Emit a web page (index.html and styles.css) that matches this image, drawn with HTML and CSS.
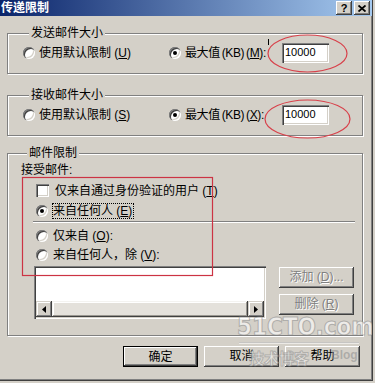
FILE: index.html
```html
<!DOCTYPE html>
<html lang="zh-CN">

<head>
    <meta charset="UTF-8">
    <meta name="viewport" content="width=device-width, initial-scale=1.0">
    <title>传递限制</title>
    <link rel="stylesheet" href="styles.css">
</head>

<body>
    <div class="window">
        <div class="titlebar">
            <span class="title">传递限制</span>
            <div class="title-buttons">
                <span class="tbtn">?</span>
                <span class="tbtn">
                    <svg width="8" height="7" viewBox="0 0 8 7"><path d="M0.5 0.5 L7.5 6.5 M7.5 0.5 L0.5 6.5" stroke="#000" stroke-width="1.8"/></svg>
                </span>
            </div>
        </div>

        <fieldset class="group group-send">
            <legend>发送邮件大小</legend>
            <div class="size-row">
                <label class="opt opt-default"><span class="radio"></span><span>使用默认限制 (<u>U</u>)</span></label>
                <label class="opt opt-max"><span class="radio checked"></span><span class="tight">最大值 (KB) (<u>M</u>):</span></label>
                <span class="textbox">10000</span>
            </div>
        </fieldset>

        <fieldset class="group group-receive">
            <legend>接收邮件大小</legend>
            <div class="size-row">
                <label class="opt opt-default"><span class="radio"></span><span>使用默认限制 (<u>S</u>)</span></label>
                <label class="opt opt-max"><span class="radio checked"></span><span class="tight">最大值 (KB) (<u>X</u>):</span></label>
                <span class="textbox">10000</span>
            </div>
        </fieldset>

        <fieldset class="group group-limit">
            <legend>邮件限制</legend>
            <div class="accept-title">接受邮件:</div>
            <label class="opt row-check"><span class="checkbox"></span><span>仅来自通过身份验证的用户 (<u>T</u>)</span></label>
            <label class="opt row-anyone"><span class="radio checked"></span><span class="focus">来自任何人 (<u>E</u>)</span></label>
            <div class="separator"></div>
            <label class="opt row-only"><span class="radio"></span><span>仅来自 (<u>O</u>):</span></label>
            <label class="opt row-except"><span class="radio"></span><span>来自任何人，除 (<u>V</u>):</span></label>
            <div class="list-area">
                <div class="listbox">
                    <div class="list-body"></div>
                    <div class="hscroll">
                        <span class="sbtn">
                            <svg width="4" height="7" viewBox="0 0 4 7"><path d="M4 0 L0 3.5 L4 7 Z" fill="#000"/></svg>
                        </span>
                        <span class="sthumb"></span>
                        <span class="sbtn">
                            <svg width="4" height="7" viewBox="0 0 4 7"><path d="M0 0 L4 3.5 L0 7 Z" fill="#000"/></svg>
                        </span>
                    </div>
                </div>
                <div class="side-buttons">
                    <button class="btn" disabled>添加 (<u>D</u>)...</button>
                    <button class="btn" disabled>删除 (<u>R</u>)</button>
                </div>
            </div>
        </fieldset>

        <div class="dialog-buttons">
            <button class="btn btn-default">确定</button>
            <button class="btn">取消</button>
            <button class="btn">帮助</button>
        </div>

        <!-- annotations drawn over the dialog -->
        <svg class="marks" width="375" height="383" viewBox="0 0 375 383">
            <ellipse cx="307.5" cy="53.5" rx="39.5" ry="18.5" fill="none" stroke="#d8404a" stroke-width="1.2"/>
            <ellipse cx="307.5" cy="119" rx="42.5" ry="19" fill="none" stroke="#d8404a" stroke-width="1.2"/>
            <rect x="22.5" y="177.5" width="190" height="98" fill="none" stroke="#cc3344" stroke-width="1.2"/>
            <line x1="268.5" y1="39" x2="268.5" y2="45" stroke="#000" stroke-width="1"/>
        </svg>

        <div class="watermark">
            <div class="wm-site">51CTO.com</div>
            <div class="wm-line"></div>
            <div class="wm-blog"><span class="wm-cn">技术博客</span><span class="wm-en">Blog</span></div>
        </div>
    </div>
</body>

</html>
```

FILE: styles.css
```css
* {
    box-sizing: border-box;
}

body {
    margin: 0;
    background-color: #d4d0c8;
    font-family: "Liberation Sans", "Noto Sans CJK SC", sans-serif;
    font-size: 12px;
    color: #000;
}

.window {
    position: relative;
    width: 373px;
    height: 381px;
    background-color: #d4d0c8;
    border-right: 1px solid #404040;
    border-bottom: 1px solid #404040;
    box-shadow: inset -1px -1px 0 #808080;
    overflow: hidden;
}

.titlebar {
    height: 16px;
    background: linear-gradient(to right, #0a246a, #a6caf0);
    display: flex;
    align-items: center;
    justify-content: space-between;
    padding: 0 2px 0 1px;
}

.title {
    color: #fff;
    font-weight: bold;
    font-size: 12px;
    line-height: 16px;
}

.title-buttons {
    display: flex;
    gap: 2px;
}

.tbtn {
    width: 16px;
    height: 14px;
    background-color: #d4d0c8;
    box-shadow: inset -1px -1px 0 #404040, inset 1px 1px 0 #fff, inset -2px -2px 0 #808080;
    display: flex;
    align-items: center;
    justify-content: center;
    font-weight: bold;
    font-size: 11px;
    line-height: 14px;
}

/* group boxes */
.group {
    margin: 0 9px 0 7px;
    border: 1px solid #808080;
    box-shadow: inset 1px 1px 0 #fff, 1px 1px 0 #fff;
    min-width: 0;
}

.group legend {
    margin-left: 6px;
    padding: 0 2px;
    line-height: 12px;
    background-color: #d4d0c8;
}

.group-send {
    margin-top: 11px;
    padding: 4px 10px 10px 15px;
}

.group-receive {
    margin-top: 15px;
    padding: 4px 10px 10px 15px;
}

.group-limit {
    margin-top: 11px;
    padding: 5px 8px 16px 13px;
}

.size-row {
    display: flex;
    align-items: center;
    height: 20px;
}

.opt {
    display: flex;
    align-items: center;
    gap: 4px;
    line-height: 12px;
    white-space: nowrap;
}

.opt-default {
    width: 146px;
}

.opt-max {
    width: 113px;
}

.tight {
    letter-spacing: -0.4px;
    word-spacing: -1px;
}

.radio {
    position: relative;
    flex: none;
    width: 12px;
    height: 12px;
    border-radius: 50%;
    background-color: #fff;
    box-shadow: inset 1px 1px 0 #808080, inset 2px 2px 0 #404040, inset -1px -1px 0 #fff, inset -2px -2px 0 #d4d0c8;
}

.radio.checked::after {
    content: "";
    position: absolute;
    left: 4px;
    top: 4px;
    width: 4px;
    height: 4px;
    border-radius: 50%;
    background-color: #000;
}

.checkbox {
    flex: none;
    width: 13px;
    height: 13px;
    background-color: #fff;
    box-shadow: inset 1px 1px 0 #808080, inset 2px 2px 0 #404040, inset -1px -1px 0 #fff, inset -2px -2px 0 #d4d0c8;
}

.textbox {
    width: 47px;
    height: 20px;
    background-color: #fff;
    box-shadow: inset 1px 1px 0 #808080, inset 2px 2px 0 #404040, inset -1px -1px 0 #fff, inset -2px -2px 0 #d4d0c8;
    padding-left: 3px;
    font-size: 11px;
    line-height: 19px;
}

/* mail restrictions */
.accept-title {
    height: 12px;
    line-height: 12px;
}

.row-check,
.row-anyone,
.row-only,
.row-except {
    margin-left: 15px;
}

.row-check {
    height: 13px;
    margin-top: 8px;
    gap: 6px;
}

.row-anyone {
    height: 18px;
    margin-top: 5px;
}

.focus {
    border: 1px dotted #000;
    padding: 0 1px 0 0;
    line-height: 14px;
}

.separator {
    margin: 1px 0 0 12px;
    width: 322px;
    height: 2px;
    border-top: 1px solid #808080;
    border-bottom: 1px solid #fff;
}

.row-only {
    height: 14px;
    margin-top: 6px;
    gap: 5px;
}

.row-except {
    height: 14px;
    margin-top: 5px;
    gap: 5px;
}

.list-area {
    display: flex;
    gap: 13px;
    margin: 4px 0 0 13px;
}

.listbox {
    width: 232px;
    height: 53px;
    display: flex;
    flex-direction: column;
    padding: 2px;
    background-color: #fff;
    box-shadow: inset 1px 1px 0 #808080, inset 2px 2px 0 #404040, inset -1px -1px 0 #fff, inset -2px -2px 0 #d4d0c8;
}

.list-body {
    flex: 1;
}

.hscroll {
    display: flex;
    height: 16px;
}

.sbtn {
    width: 16px;
    height: 16px;
    flex: none;
    display: flex;
    align-items: center;
    justify-content: center;
    background-color: #d4d0c8;
    box-shadow: inset -1px -1px 0 #404040, inset 1px 1px 0 #d4d0c8, inset -2px -2px 0 #808080, inset 2px 2px 0 #fff;
}

.sthumb {
    flex: 1;
    background-color: #e4e1db;
    box-shadow: inset -1px -1px 0 #404040, inset 1px 1px 0 #f4f3f0, inset -2px -2px 0 #9a9790, inset 2px 2px 0 #fff;
}

.side-buttons {
    display: flex;
    flex-direction: column;
    gap: 6px;
    padding-top: 1px;
}

.btn {
    width: 75px;
    height: 21px;
    padding: 0;
    border: none;
    background-color: #d4d0c8;
    box-shadow: inset -1px -1px 0 #404040, inset 1px 1px 0 #fff, inset -2px -2px 0 #808080;
    font-family: "Liberation Sans", "Noto Sans CJK SC", sans-serif;
    font-size: 12px;
    line-height: 21px;
    color: #000;
}

.btn:disabled {
    color: #808080;
    text-shadow: 1px 1px 0 #fff;
}

.btn-default {
    border: 1px solid #000;
}

.dialog-buttons {
    display: flex;
    justify-content: flex-end;
    gap: 6px;
    margin-top: 10px;
    padding-right: 12px;
}

/* overlays */
.marks {
    position: absolute;
    left: 0;
    top: 0;
    pointer-events: none;
}

.watermark {
    position: absolute;
    left: 237px;
    top: 314px;
    width: 132px;
    pointer-events: none;
}

.wm-site {
    font-family: "Liberation Sans Narrow", "DejaVu Sans Condensed", sans-serif;
    font-weight: bold;
    font-size: 24px;
    line-height: 27px;
    color: rgba(255, 255, 255, 0.6);
    -webkit-text-stroke: 1px rgba(130, 130, 130, 0.55);
}

.wm-line {
    margin: 1px 10px 0 2px;
    height: 2px;
    background-color: rgba(255, 255, 255, 0.55);
    border-top: 1px solid rgba(130, 130, 130, 0.35);
}

.wm-blog {
    display: flex;
    align-items: flex-start;
    margin: 5px 0 0 12px;
}

.wm-cn {
    font-family: "Noto Sans CJK SC", sans-serif;
    font-weight: bold;
    font-size: 15px;
    line-height: 18px;
    color: rgba(255, 255, 255, 0.5);
    -webkit-text-stroke: 1px rgba(130, 130, 130, 0.5);
}

.wm-en {
    margin-left: 22px;
    font-weight: bold;
    font-size: 12px;
    line-height: 12px;
    color: rgba(140, 140, 140, 0.55);
}
```
